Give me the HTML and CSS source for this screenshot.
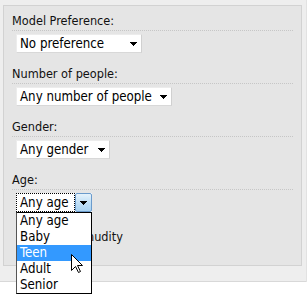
FILE: index.html
```html
<!DOCTYPE html>
<html>
<head>
<meta charset="utf-8">
<link rel="stylesheet" href="styles.css">
</head>
<body>
<div class="page">
  <div class="panel">
    <div class="field">
      <div class="label">Model Preference:</div>
      <div class="select w1"><span>No preference</span><svg class="arrow" width="7" height="4" viewBox="0 0 7 4"><path d="M0 0H7L3.5 4Z" fill="#000"/></svg></div>
    </div>
    <div class="field">
      <div class="label">Number of people:</div>
      <div class="select w2"><span>Any number of people</span><svg class="arrow" width="7" height="4" viewBox="0 0 7 4"><path d="M0 0H7L3.5 4Z" fill="#000"/></svg></div>
    </div>
    <div class="field">
      <div class="label">Gender:</div>
      <div class="select w3"><span>Any gender</span><svg class="arrow" width="7" height="4" viewBox="0 0 7 4"><path d="M0 0H7L3.5 4Z" fill="#000"/></svg></div>
    </div>
    <div class="field last">
      <div class="label">Age:</div>
      <div class="select open w4"><span class="focus">Any age</span><span class="btn"><svg class="arrow" width="7" height="4" viewBox="0 0 7 4"><path d="M0 0H7L3.5 4Z" fill="#000"/></svg></span></div>
    </div>
    <div class="check"><span class="box"></span><span>No nudity</span></div>
  </div>
  <div class="footer"></div>

  <ul class="list">
    <li>Any age</li>
    <li>Baby</li>
    <li class="sel">Teen</li>
    <li>Adult</li>
    <li>Senior</li>
  </ul>
  <svg class="cursor" width="13" height="20" viewBox="0 0 13 20"><path d="M0.5 0.5V16.5L4.5 12.5L7.5 18.5L9.5 17.5L6.5 11.5H11.5Z" fill="#fff" stroke="#000" stroke-width="1" stroke-linejoin="miter"/></svg>
</div>
</body>
</html>
```

FILE: styles.css
```css
html, body {
  margin: 0;
  padding: 0;
  background: #ffffff;
}
body {
  font-family: "DejaVu Sans Condensed", "DejaVu Sans", sans-serif;
  font-stretch: condensed;
  color: #111;
  min-height: 303px;
}
.page {
  position: relative;
  background: #eeeeee;
  padding: 5px 4px 16px 3px;
  border-right: 1px solid #e2e2e2;
  width: 307px;
  box-sizing: border-box;
}
.panel {
  background: #e5e5e5;
  border: 1px solid #d2d2d2;
  padding: 7px 8px 21px 8px;
}
.field {
  margin-bottom: 13px;
}
.field.last {
  margin-bottom: 17px;
}
.label {
  font-size: 12.6px;
  line-height: 15px;
  padding-bottom: 2px;
  border-bottom: 1px dotted #c6c6c6;
}
.select {
  margin: 3px 0 0 4px;
  height: 19px;
  box-sizing: border-box;
  background: #fff;
  border: 1px solid #ececec;
  border-right-color: #d0d0d0;
  border-bottom-color: #d8d8d8;
  display: flex;
  align-items: center;
  justify-content: space-between;
  padding: 0 4px 0 3px;
  font-size: 13.2px;
  line-height: 17px;
  color: #000;
}
.arrow {
  display: block;
  shape-rendering: crispEdges;
}
.w1 { width: 126px; }
.w2 { width: 156px; }
.w3 { width: 94px; }
.w4 { width: 76px; }
.select.open {
  border: none;
  padding: 0;
  align-items: stretch;
}
.focus {
  width: 59px;
  box-sizing: border-box;
  border: 1px dotted #000;
  padding-left: 3px;
  line-height: 17px;
}
.btn {
  width: 17px;
  box-sizing: border-box;
  border: 1px solid #6b9bcc;
  border-radius: 2px;
  background: linear-gradient(#e6f3fc, #c2e0f6 50%, #a9d3f2);
  display: flex;
  align-items: center;
  justify-content: center;
}
.check {
  font-size: 12.6px;
  line-height: 15px;
  display: flex;
  align-items: center;
  padding-left: 38px;
}
.box {
  width: 11px;
  height: 11px;
  border: 1px solid #8f8f8f;
  background: #fff;
  margin-right: 5px;
}
.footer {
  position: absolute;
  left: 0;
  right: 0;
  top: 281px;
  height: 1px;
  background: #d8d8d8;
}
.list {
  position: absolute;
  left: 16px;
  top: 212px;
  width: 76px;
  box-sizing: border-box;
  margin: 0;
  padding: 0;
  list-style: none;
  background: #fff;
  border: 1px solid #000;
  border-left-color: #555;
  font-size: 13.2px;
  line-height: 16px;
  color: #000;
}
.list li {
  padding-left: 3px;
  height: 16px;
}
.list li.sel {
  background: #3399ff;
  color: #fff;
}
.cursor {
  position: absolute;
  left: 71px;
  top: 254px;
}
```
